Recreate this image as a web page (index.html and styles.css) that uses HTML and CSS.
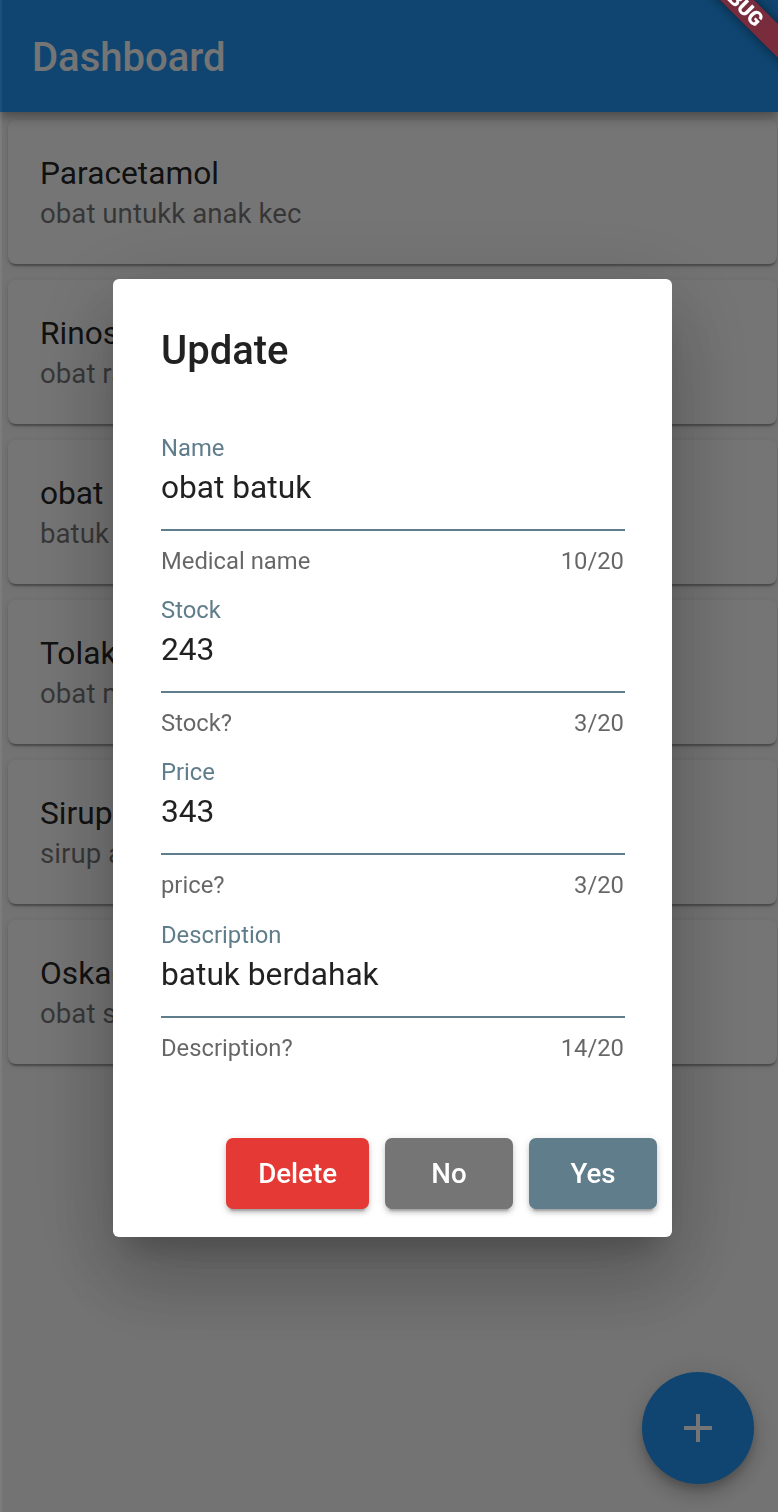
FILE: index.html
```html
<!DOCTYPE html>
<html lang="id">
<head>
<meta charset="utf-8">
<title>Dashboard</title>
<link rel="stylesheet" href="styles.css">
</head>
<body>
<div class="app">
  <header class="appbar">
    <h1 class="appbar-title">Dashboard</h1>
  </header>
  <main class="list">
    <div class="card"><div class="card-title">Paracetamol</div><div class="card-sub">obat untukk anak kec</div></div>
    <div class="card"><div class="card-title">Rinos</div><div class="card-sub">obat radang</div></div>
    <div class="card"><div class="card-title">obat batuk</div><div class="card-sub">batuk berdahak</div></div>
    <div class="card"><div class="card-title">Tolak Angin</div><div class="card-sub">obat masuk angin</div></div>
    <div class="card"><div class="card-title">Sirup</div><div class="card-sub">sirup anak</div></div>
    <div class="card"><div class="card-title">Oskadon</div><div class="card-sub">obat sakit kepala</div></div>
  </main>
  <button class="fab" aria-label="Add">
    <svg class="fab-icon" viewBox="0 0 24 24" width="48" height="48"><path d="M19 13h-6v6h-2v-6H5v-2h6V5h2v6h6v2z"/></svg>
  </button>
</div>

<div class="scrim">
  <div class="dialog">
    <h2 class="dialog-title">Update</h2>
    <div class="fields">
      <div class="field">
        <div class="field-label">Name</div>
        <div class="field-input">obat batuk</div>
        <div class="field-help"><span>Medical name</span><span>10/20</span></div>
      </div>
      <div class="field">
        <div class="field-label">Stock</div>
        <div class="field-input">243</div>
        <div class="field-help"><span>Stock?</span><span>3/20</span></div>
      </div>
      <div class="field">
        <div class="field-label">Price</div>
        <div class="field-input">343</div>
        <div class="field-help"><span>price?</span><span>3/20</span></div>
      </div>
      <div class="field">
        <div class="field-label">Description</div>
        <div class="field-input">batuk berdahak</div>
        <div class="field-help"><span>Description?</span><span>14/20</span></div>
      </div>
    </div>
    <div class="actions">
      <button class="btn btn-delete">Delete</button>
      <button class="btn btn-no">No</button>
      <button class="btn btn-yes">Yes</button>
    </div>
  </div>
</div>

<div class="debug-banner">DEBUG</div>
<div class="edge"></div>
</body>
</html>
```

FILE: styles.css
```css
* {
  box-sizing: border-box;
}

html,
body {
  margin: 0;
  padding: 0;
}

body {
  width: 778px;
  height: 1512px;
  overflow: hidden;
  background: #fafafa;
  font-family: Roboto, "Noto Sans", "Liberation Sans", sans-serif;
  position: relative;
}

.appbar {
  height: 112px;
  background: #2196f3;
  padding: 0 32px;
  display: flex;
  align-items: center;
  position: relative;
  z-index: 1;
  box-shadow: 0 4px 8px -2px rgba(0, 0, 0, 0.2), 0 8px 10px rgba(0, 0, 0, 0.14), 0 2px 20px rgba(0, 0, 0, 0.12);
}

.appbar-title {
  margin: 0;
  padding-top: 3px;
  font-size: 40px;
  font-weight: 500;
  line-height: 47px;
  color: #ffffff;
}

.list {
  padding: 8px 1px 0 8px;
  display: flex;
  flex-direction: column;
  gap: 16px;
}

.card {
  height: 144px;
  background: #ffffff;
  border-radius: 8px;
  padding: 35px 32px 29px;
  box-shadow: 0 4px 2px -2px rgba(0, 0, 0, 0.2), 0 2px 2px rgba(0, 0, 0, 0.14), 0 2px 6px rgba(0, 0, 0, 0.12);
}

.card-title {
  font-size: 31.7px;
  line-height: 38px;
  color: rgba(0, 0, 0, 0.87);
  white-space: nowrap;
}

.card-sub {
  font-size: 27.7px;
  line-height: 42px;
  color: rgba(0, 0, 0, 0.54);
  white-space: nowrap;
}

.fab {
  position: fixed;
  left: 642px;
  top: 1372px;
  width: 112px;
  height: 112px;
  padding: 0;
  border: none;
  border-radius: 50%;
  background: #2196f3;
  display: flex;
  align-items: center;
  justify-content: center;
  box-shadow: 0 6px 10px -2px rgba(0, 0, 0, 0.2), 0 12px 20px rgba(0, 0, 0, 0.14), 0 2px 36px rgba(0, 0, 0, 0.12);
}

.fab-icon {
  fill: #ffffff;
  display: block;
}

.scrim {
  position: fixed;
  inset: 0;
  z-index: 10;
  background: rgba(0, 0, 0, 0.54);
  padding: 279px 0 0 113px;
}

.dialog {
  width: 559px;
  background: #ffffff;
  border-radius: 6px;
  padding: 48px 0 28px 0;
  box-shadow: 0 22px 30px -14px rgba(0, 0, 0, 0.2), 0 48px 76px 6px rgba(0, 0, 0, 0.14), 0 18px 92px 16px rgba(0, 0, 0, 0.12);
}

.dialog-title {
  margin: 0 47px 0 48px;
  font-size: 40px;
  font-weight: 500;
  line-height: 47px;
  color: rgba(0, 0, 0, 0.87);
}

.fields {
  margin: 60px 47px 0 48px;
  display: flex;
  flex-direction: column;
  gap: 21.2px;
}

.field-label {
  font-size: 23.8px;
  line-height: 28px;
  color: #607d8b;
}

.field-input {
  margin-top: 7px;
  padding-bottom: 22px;
  font-size: 31.7px;
  line-height: 38px;
  color: rgba(0, 0, 0, 0.87);
  border-bottom: 2px solid #607d8b;
}

.field-help {
  margin-top: 16px;
  padding-right: 1px;
  display: flex;
  justify-content: space-between;
  font-size: 23.8px;
  line-height: 28px;
  color: rgba(0, 0, 0, 0.6);
}

.actions {
  margin-top: 64.4px;
  padding: 12px 15px 0 0;
  display: flex;
  justify-content: flex-end;
  gap: 16px;
}

.btn {
  height: 71px;
  min-width: 128px;
  padding: 0 32px;
  border: none;
  border-radius: 7px;
  font-family: Roboto, "Noto Sans", sans-serif;
  font-size: 27.7px;
  font-weight: 500;
  color: #ffffff;
  box-shadow: 0 6px 2px -4px rgba(0, 0, 0, 0.2), 0 4px 4px rgba(0, 0, 0, 0.14), 0 2px 10px rgba(0, 0, 0, 0.12);
}

.btn-delete {
  background: #e53935;
}

.btn-no {
  background: #757575;
}

.btn-yes {
  background: #607d8b;
}

.debug-banner {
  position: fixed;
  z-index: 20;
  left: 658px;
  top: -12px;
  width: 158px;
  height: 24px;
  transform: rotate(45deg);
  background: rgba(183, 28, 28, 0.627);
  color: #ffffff;
  font-size: 20.2px;
  font-weight: 900;
  line-height: 24px;
  text-align: center;
  box-shadow: 0 0 12px rgba(0, 0, 0, 0.5);
}

.edge {
  position: fixed;
  z-index: 30;
  left: 0;
  top: 0;
  width: 2px;
  height: 100%;
  background: rgba(255, 255, 255, 0.06);
}
```
